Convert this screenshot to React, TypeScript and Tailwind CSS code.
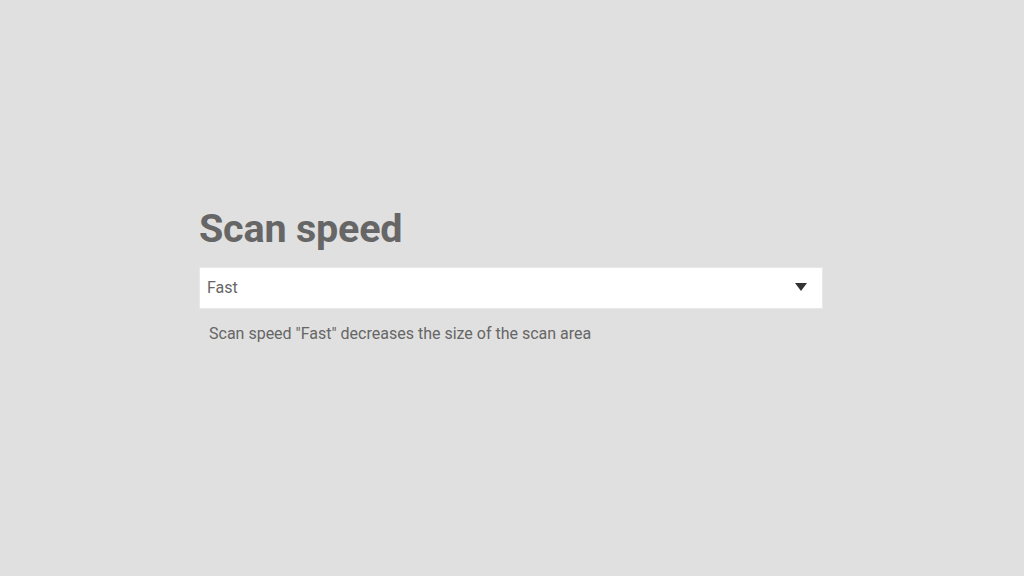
export default function App() {
  return (
    <div className="min-h-[576px] w-full bg-[#e0e0e0] font-['Roboto',sans-serif] text-[#666666]">
      <div className="pl-[199px] pt-[208px]">
        <h1 className="text-[39.5px] font-bold leading-[42px] tracking-[-0.2px]">Scan speed</h1>
        <div className="mt-[17px] flex h-[42px] w-[624px] items-center justify-between border border-[#e8e8e8] bg-white pl-[7px] pr-[15px]">
          <span className="text-[16px]">Fast</span>
          <svg width="12" height="8" viewBox="0 0 12 8" className="mb-[2px]">
            <path d="M0 0H12L6 8Z" fill="#333333" />
          </svg>
        </div>
        <p className="mt-[13px] pl-[10px] text-[16px]">Scan speed "Fast" decreases the size of the scan area</p>
      </div>
    </div>
  );
}
